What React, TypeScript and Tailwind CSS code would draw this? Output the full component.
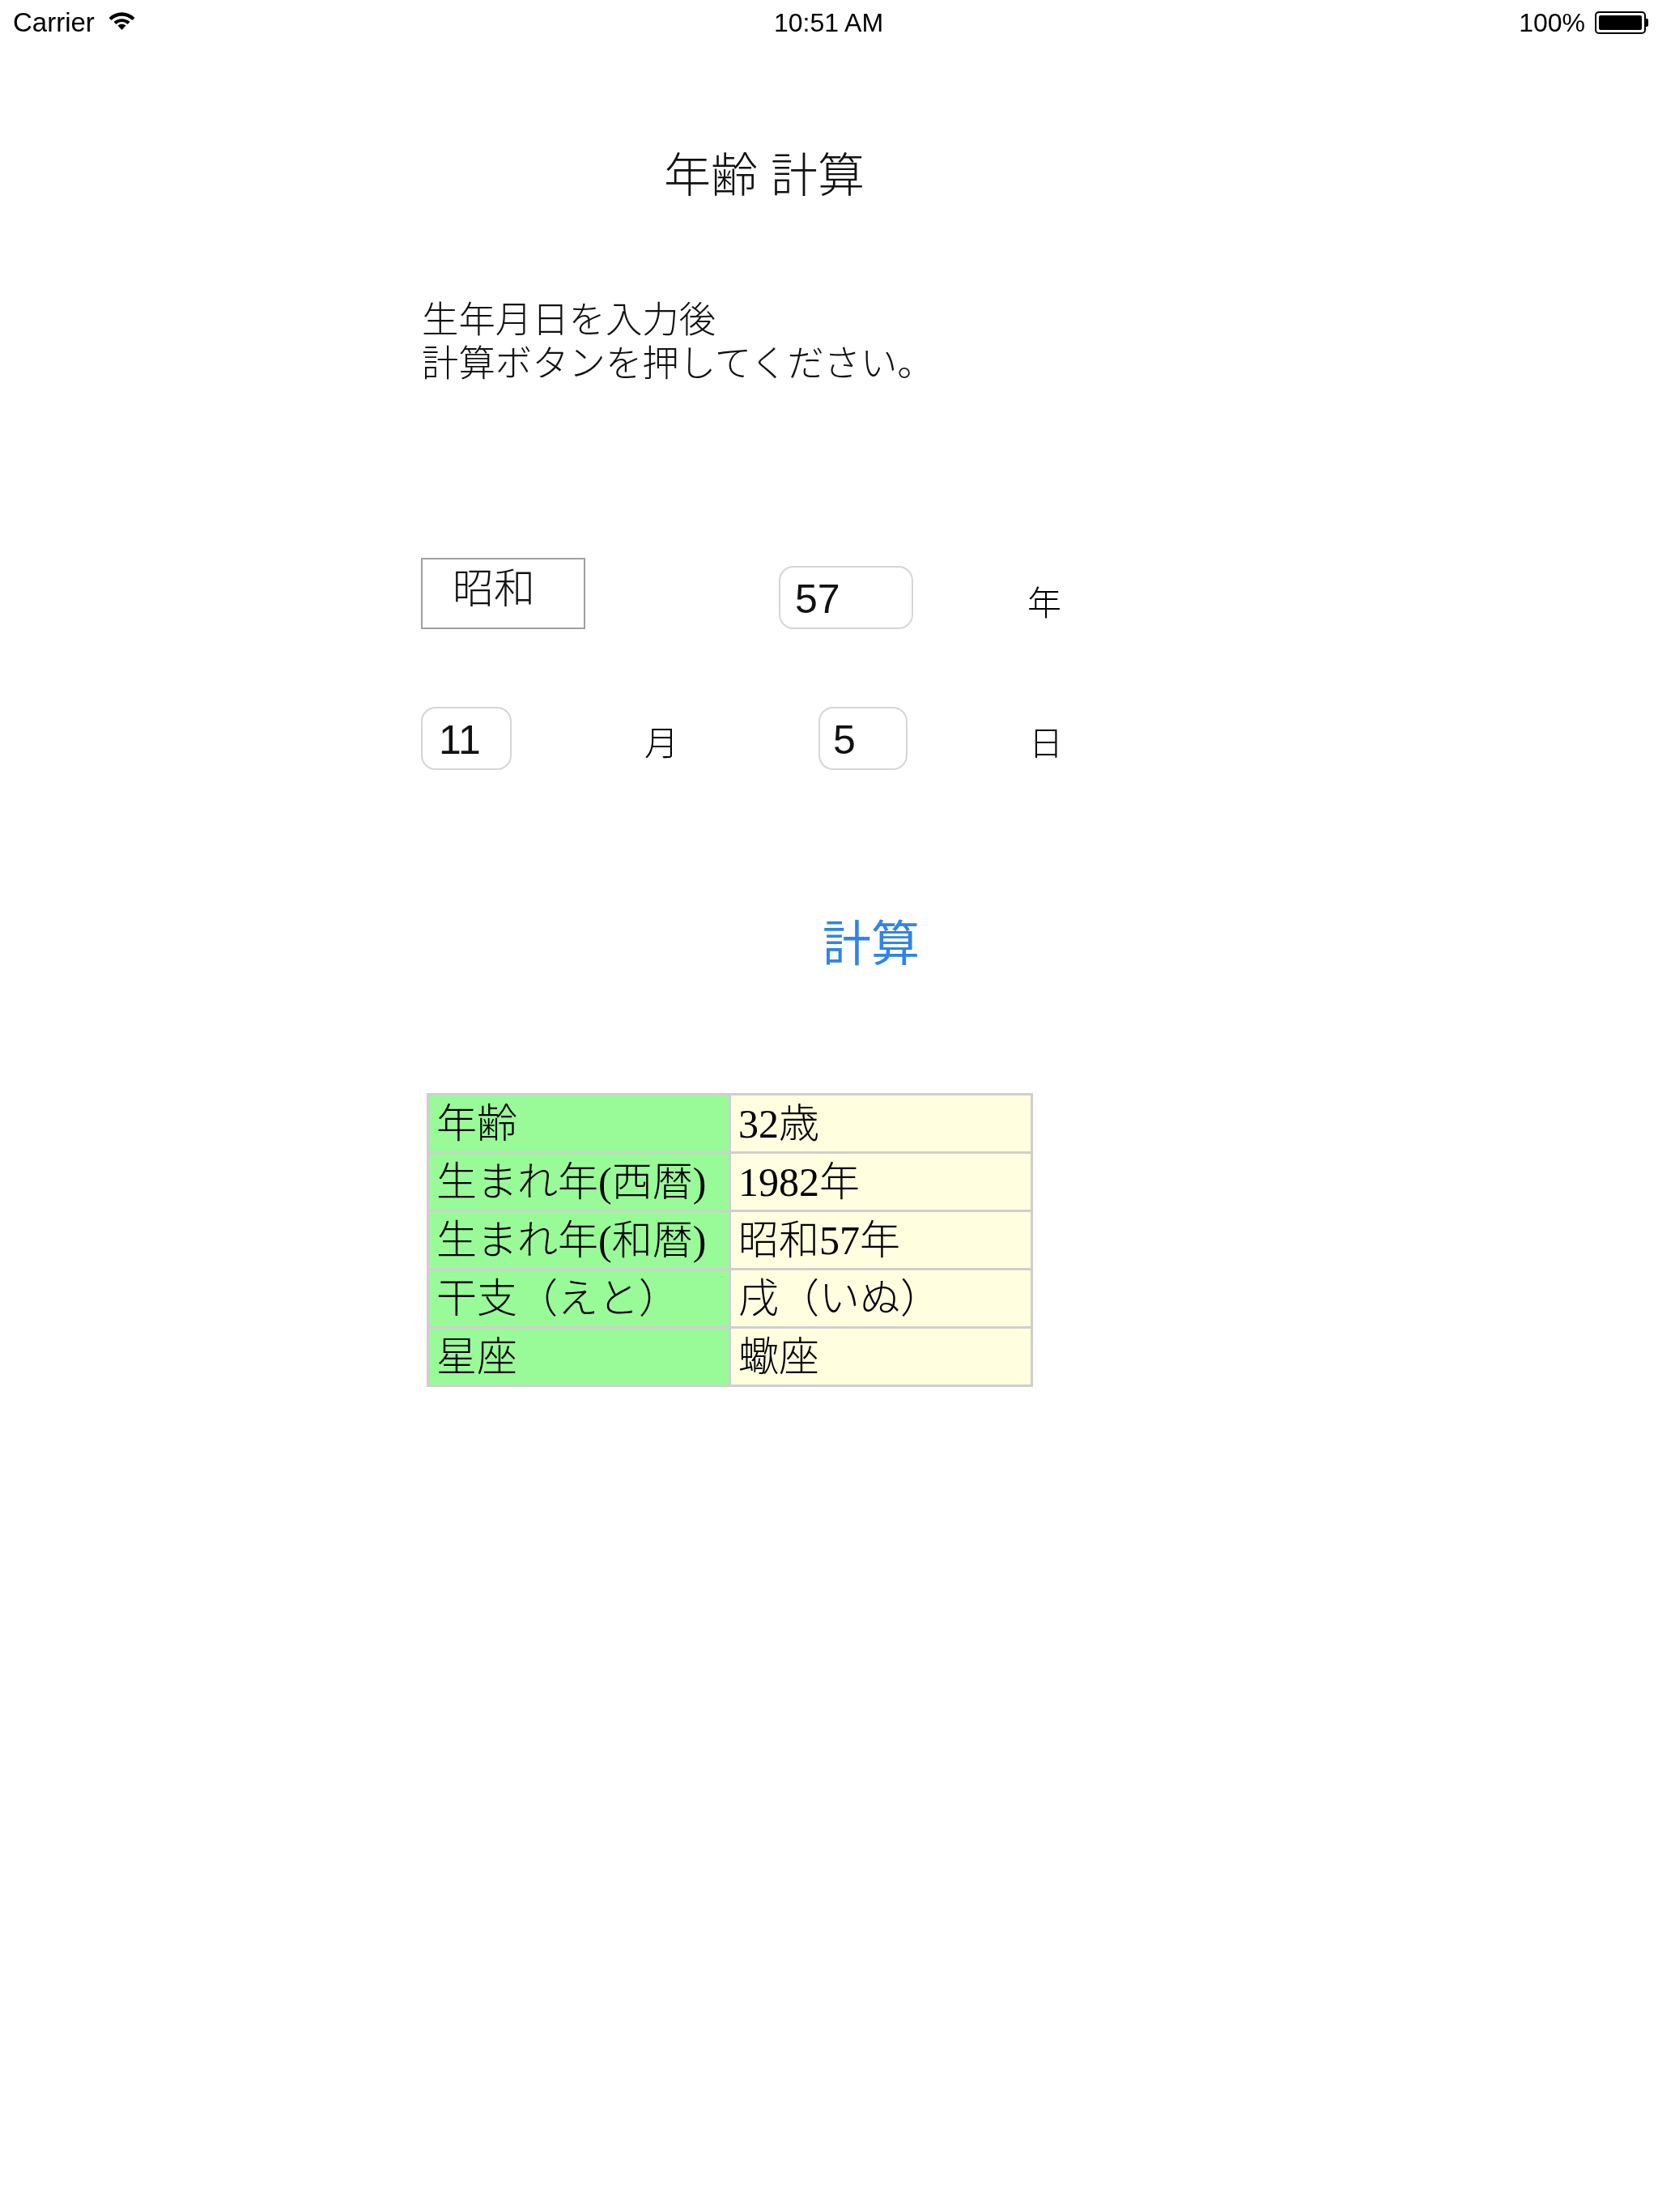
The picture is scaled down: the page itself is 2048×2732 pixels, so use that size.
const gothic = "font-['Liberation_Sans','Noto_Sans_CJK_JP',sans-serif]"

const rows = [
  ['年齢', '32歳'],
  ['生まれ年(西暦)', '1982年'],
  ['生まれ年(和暦)', '昭和57年'],
  ['干支（えと）', '戌（いぬ）'],
  ['星座', '蠍座'],
]

function StatusBar() {
  return (
    <div className="flex h-[56px] items-center justify-between pl-[16px] pr-[12px] text-[32px] text-black">
      <div className="flex w-[400px] items-center gap-[16px]">
        <span className="text-[33px]">Carrier</span>
        <svg width="35" height="24" viewBox="0 0 34 24" className="mb-[4px]">
          <path d="M1 8 C10 -1 24 -1 33 8 L30 11 C22 4 12 4 4 11 Z" fill="#000" />
          <path d="M7 13 C13 8 21 8 27 13 L24 16 C20 12 14 12 10 16 Z" fill="#000" />
          <path d="M12 17.5 C15 15 19 15 22 17.5 L17 23 Z" fill="#000" />
        </svg>
      </div>
      <span>10:51 AM</span>
      <div className="flex w-[405px] items-center justify-end gap-[12px]">
        <span>100%</span>
        <div className="flex items-center">
          <div className="h-[28px] w-[63px] rounded-[5px] border-2 border-black p-[3px]">
            <div className="h-full w-full rounded-[2px] bg-black" />
          </div>
          <div className="h-[10px] w-[3px] rounded-r-[2px] bg-black" />
        </div>
      </div>
    </div>
  )
}

function NumberBox({ value, className }: { value: string; className: string }) {
  return (
    <div className={`flex h-[78px] items-center rounded-[18px] border-2 border-[#d6d6d6] pt-[5px] text-[50px] text-[#111] ${className}`}>
      {value}
    </div>
  )
}

export default function App() {
  return (
    <div className={`min-h-[2732px] bg-white blur-[0.6px] ${gothic}`}>
      <StatusBar />

      <h1 className="mt-[129px] pl-[820px] text-[58px] leading-[64px] font-light text-[#111]">年齢 計算</h1>

      <div className="mt-[120px] ml-[520px]">
        <p className="ml-[1px] text-[45.4px] leading-[54px] font-light text-[#111]">
          生年月日を入力後
          <br />
          計算ボタンを押してください。
        </p>

        <div className="mt-[212px] flex items-start">
          <div className="h-[88px] w-[203px] border-2 border-[#a0a0a0] pt-[4px] pl-[37px] text-[51px] leading-[66px] font-light text-[#111]">
            昭和
          </div>
          <NumberBox value="57" className="mt-[10px] ml-[239px] w-[166px] pl-[18px]" />
          <span className="mt-[27px] ml-[141px] text-[42px] leading-[60px] font-light text-black">年</span>
        </div>

        <div className="mt-[96px] flex items-start">
          <NumberBox value="11" className="w-[112px] pl-[20px]" />
          <span className="mt-[16px] ml-[164px] text-[42px] leading-[60px] font-light text-black">月</span>
          <NumberBox value="5" className="ml-[173px] w-[110px] pl-[16px]" />
          <span className="mt-[16px] ml-[150px] text-[42px] leading-[60px] font-light text-black">日</span>
        </div>

        <button className="mt-[178px] ml-[496px] block text-[60px] leading-[76px] text-[#2f85e6]">計算</button>

        <table className="mt-[145px] ml-[7px] w-[749px] table-fixed border-collapse font-['Liberation_Serif','Noto_Sans_CJK_JP',serif] text-[50px] font-light text-black">
          <tbody>
            {rows.map(([label, value]) => (
              <tr key={label} className="h-[72px]">
                <td className="border-[3px] border-[#cfcfcf] bg-[#98fb98] pl-[9px] leading-none whitespace-nowrap">{label}</td>
                <td className="border-[3px] border-[#cfcfcf] bg-[#ffffe0] pl-[9px] leading-none whitespace-nowrap">{value}</td>
              </tr>
            ))}
          </tbody>
        </table>
      </div>
    </div>
  )
}
